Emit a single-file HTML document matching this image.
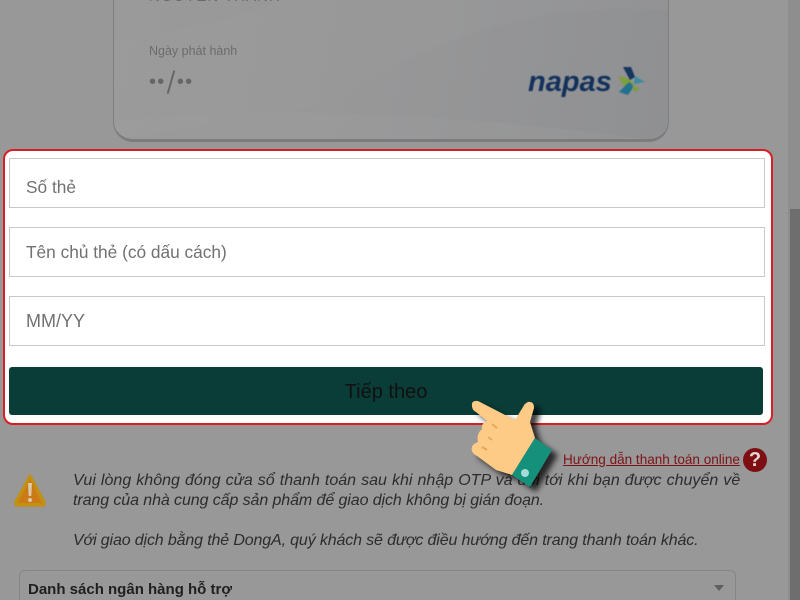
<!DOCTYPE html>
<html lang="vi">
<head>
<meta charset="utf-8">
<style>
html,body{margin:0;padding:0;width:800px;height:600px;overflow:hidden;background:#989898;font-family:"Liberation Sans","Noto Sans CJK SC",sans-serif}
#page{position:relative;width:800px;height:600px;overflow:hidden;background:#989898}
.a{position:absolute}
#card{left:113px;top:-60px;width:556px;height:202px;border:1px solid #7f7f7f;border-bottom:3px solid #7c7c7c;border-radius:0 0 20px 20px;box-sizing:border-box;overflow:hidden;background:linear-gradient(100deg,#9a9a9a 0%,#979798 50%,#8f9092 100%)}
#box{left:3px;top:149px;width:770px;height:276px;box-sizing:border-box;border:2px solid #d81e24;border-radius:10px;background:#fff}
.inp{left:9px;width:756px;height:50px;box-sizing:border-box;border:1px solid #c8c8c8;background:#fff;color:#717171;line-height:48px;padding-left:16px;white-space:nowrap}
#btn{left:9px;top:367px;width:754px;height:48px;border-radius:3px;background:#0a3c38;color:#111;font-size:20px;line-height:50px;text-align:center}
.note{left:73px;font-size:16px;font-style:italic;color:#2c2c2c;white-space:nowrap;line-height:20px}
</style>
</head>
<body>
<div id="page">
<div class="a" id="card">
<svg class="a" style="left:0;top:0" width="554" height="199" viewBox="0 0 554 199">
<path d="M0 100 C110 78 190 70 260 0 L554 0 L554 70 C430 60 330 90 210 165 L0 199Z" fill="#9e9e9e" opacity=".18"/>
<path d="M0 180 C150 165 320 170 540 199 L0 199Z" fill="#a0a0a0" opacity=".25"/>
</svg>
<div class="a" style="left:35px;top:47px;font-size:15px;letter-spacing:1px;color:#6a6a6a;white-space:nowrap">NGUYEN THANH</div>
<div class="a" style="left:35px;top:103px;font-size:12.500px;color:#6c6c6c;white-space:nowrap">Ngày phát hành</div>
<div class="a" style="left:35px;top:129px;font-size:20px;color:#666;white-space:nowrap;letter-spacing:1.200px">••<span style="display:inline-block;width:1.500px;height:24px;background:#666;transform:rotate(16deg);margin:0 5px;vertical-align:-6px"></span>••</div>
<div class="a" style="left:414px;top:125px;font-size:29px;line-height:32px;font-weight:bold;font-style:italic;color:#13315c;white-space:nowrap;filter:blur(.4px)">napas</div>
</div>
<svg class="a" style="left:616px;top:65px;filter:blur(.4px)" width="30" height="32" viewBox="0 0 30 32">
<path d="M7 2 L15 2 L19 12 L14 15Z" fill="#14365f"/>
<path d="M19 11 L29 17 L18 19Z" fill="#3c8ba3"/>
<path d="M2 11 L13 14 L18 19 L8 21Z" fill="#7e9f38"/>
<path d="M3 27 L13 17 L18 21 L12 30Z" fill="#24708f"/>
<path d="M16 20 L24 24 L18 27Z" fill="#7e9f38"/>
</svg>

<div class="a" style="left:788px;top:0;width:12px;height:600px;background:#8e8e8e"></div>
<div class="a" style="left:790px;top:209px;width:10px;height:391px;background:#6e6e6e"></div>

<div class="a" id="box"></div>
<div class="a inp" style="top:158px;font-size:17.300px;line-height:56px">Số thẻ</div>
<div class="a inp" style="top:227px;font-size:17.300px">Tên chủ thẻ (có dấu cách)</div>
<div class="a inp" style="top:296px;font-size:18px">MM/YY</div>
<div class="a" id="btn">Tiếp theo</div>

<svg class="a" style="left:13px;top:472px" width="34" height="36" viewBox="0 0 34 36">
<path d="M17 3.500 L31.500 30 Q32 33.500 29.500 33.500 L4.500 33.500 Q2 33.500 2.500 30Z" fill="#c29012" stroke="#c29012" stroke-width="2.500" stroke-linejoin="round"/>
<path d="M17 7 L29 31 L5 31Z" fill="#cb7a16"/>
<path d="M15 11 L19 11 L18.300 24 L15.700 24Z" fill="#d9c8ae"/>
<circle cx="17" cy="28" r="2" fill="#d9c8ae"/>
</svg>

<div class="a note" style="top:471px;word-spacing:.55px;letter-spacing:.02px">Vui lòng không đóng cửa sổ thanh toán sau khi nhập OTP và đợi tới khi bạn được chuyển về</div>
<div class="a note" style="top:491px;letter-spacing:-.09px">trang của nhà cung cấp sản phẩm để giao dịch không bị gián đoạn.</div>
<div class="a note" style="top:531px;letter-spacing:-.14px">Với giao dịch bằng thẻ DongA, quý khách sẽ được điều hướng đến trang thanh toán khác.</div>

<div class="a" style="left:563px;top:451px;font-size:13.550px;line-height:18px;color:#7f1216;text-decoration:underline;white-space:nowrap">Hướng dẫn thanh toán online</div>
<div class="a" style="left:743px;top:448px;width:24px;height:24px;border-radius:50%;background:#7d0f13;color:#e6d6d6;font-size:20px;font-weight:bold;line-height:24px;text-align:center">?</div>

<div class="a" style="left:19px;top:570px;width:717px;height:40px;box-sizing:border-box;border:1px solid #858585;border-radius:6px"></div>
<div class="a" style="left:28px;top:580px;font-size:15px;font-weight:bold;color:#1f1f1f;white-space:nowrap;line-height:20px">Danh sách ngân hàng hỗ trợ</div>
<div class="a" style="left:714px;top:585px;width:0;height:0;border-left:5.500px solid transparent;border-right:5.500px solid transparent;border-top:6px solid #5f5f5f"></div>

<svg class="a" style="left:460px;top:390px;filter:drop-shadow(6px 5px 3px rgba(0,0,0,.75))" width="110" height="110" viewBox="460 390 110 110">
<path d="M478 401 Q471 400 472 406 Q472 410 476 412 L487 421 Q481 423 482 429 Q476 434 478 442 Q470 445 472 451 Q473 454 477 456 L496 470 L512 475 L535 438 L530 422 L534 408 Q534 401 528 402 Q525 403 523 407 L515 420Z" fill="#fdcb85"/>
<path d="M492 424 L497 428 M488 437 L492 440 M482 447 L487 450" stroke="#e8a55d" stroke-width="2" fill="none"/>
<path d="M535 438 L552 450 L530 487 L512 475Z" fill="#15907a"/>
<circle cx="525" cy="473" r="4" fill="#a5dcd8"/>
</svg>
</div>
</body>
</html>
